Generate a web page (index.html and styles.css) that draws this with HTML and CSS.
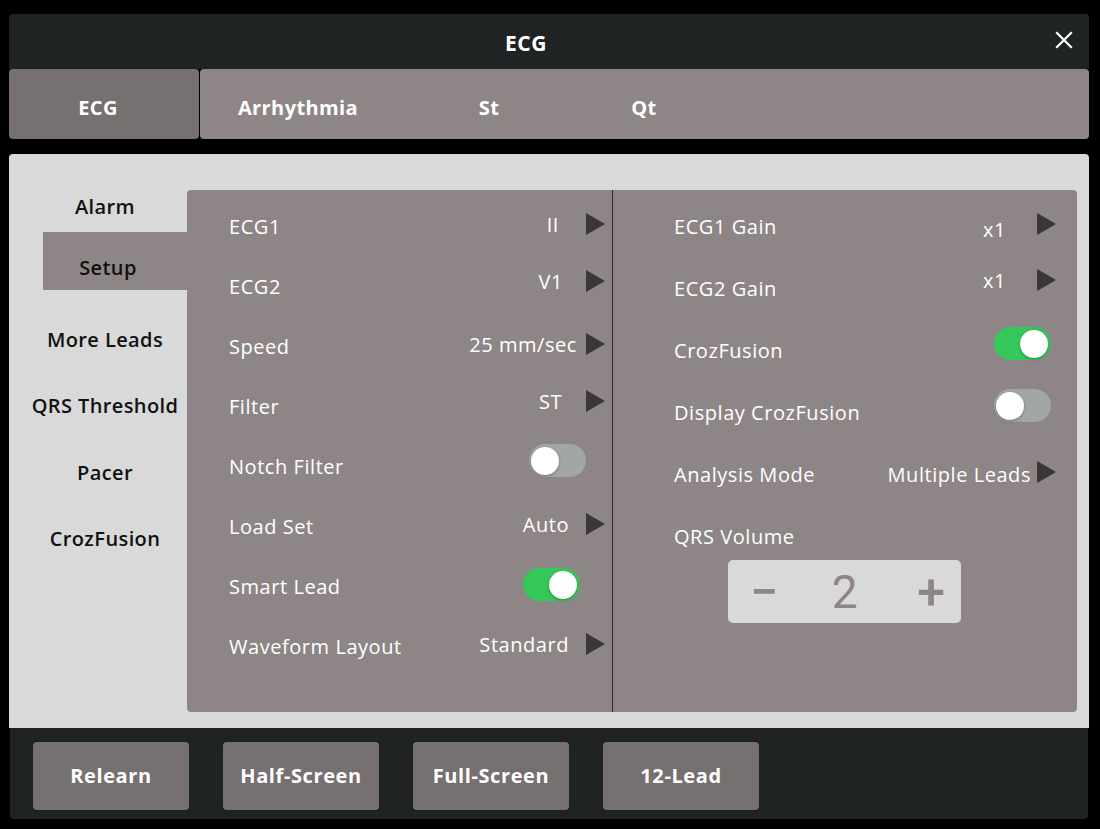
FILE: index.html
```html
<!DOCTYPE html>
<html>
<head>
<meta charset="utf-8">
<link rel="stylesheet" href="styles.css">
</head>
<body>
<div class="app">
  <header class="header">
    <span class="title">ECG</span>
    <svg class="close" width="18" height="18" viewBox="0 0 18 18"><path d="M2 2 L16 16 M16 2 L2 16" stroke="#fff" stroke-width="2.2" stroke-linecap="square"/></svg>
  </header>
  <nav class="tabs">
    <div class="tab active">ECG</div>
    <div class="tabgroup">
      <div class="tab t-arr">Arrhythmia</div>
      <div class="tab t-st">St</div>
      <div class="tab t-qt">Qt</div>
    </div>
  </nav>
  <section class="content">
    <aside class="sidebar">
      <div class="side-item alarm">Alarm</div>
      <div class="side-item setup">Setup</div>
      <div class="side-item more">More Leads</div>
      <div class="side-item">QRS Threshold</div>
      <div class="side-item">Pacer</div>
      <div class="side-item">CrozFusion</div>
    </aside>
    <main class="panel">
      <div class="col left">
        <div class="row"><span class="label">ECG1</span><span class="value v-ii">II</span><span class="arrow"></span></div>
        <div class="row"><span class="label">ECG2</span><span class="value up2 v-v1">V1</span><span class="arrow up2"></span></div>
        <div class="row"><span class="label">Speed</span><span class="value v-speed">25 mm/sec</span><span class="arrow"></span></div>
        <div class="row"><span class="label">Filter</span><span class="value up2 v-st">ST</span><span class="arrow up2"></span></div>
        <div class="row"><span class="label">Notch Filter</span><span class="toggle off notch"><span class="knob"></span></span></div>
        <div class="row"><span class="label">Load Set</span><span class="value">Auto</span><span class="arrow"></span></div>
        <div class="row"><span class="label">Smart Lead</span><span class="toggle on smart"><span class="knob"></span></span></div>
        <div class="row"><span class="label">Waveform Layout</span><span class="value">Standard</span><span class="arrow"></span></div>
      </div>
      <div class="col right">
        <div class="row"><span class="label">ECG1 Gain</span><span class="value x1 down">x1</span><span class="arrow"></span></div>
        <div class="row"><span class="label">ECG2 Gain</span><span class="value x1 up3">x1</span><span class="arrow up3"></span></div>
        <div class="row"><span class="label">CrozFusion</span><span class="toggle on rt"><span class="knob"></span></span></div>
        <div class="row"><span class="label">Display CrozFusion</span><span class="toggle off rt"><span class="knob"></span></span></div>
        <div class="row"><span class="label">Analysis Mode</span><span class="value tight">Multiple Leads</span><span class="arrow"></span></div>
        <div class="row"><span class="label">QRS Volume</span></div>
        <div class="stepper">
          <span class="step-btn">&#8722;</span>
          <span class="step-val">2</span>
          <span class="step-btn">+</span>
        </div>
      </div>
    </main>
  </section>
  <footer class="footer">
    <button class="btn">Relearn</button>
    <button class="btn">Half-Screen</button>
    <button class="btn">Full-Screen</button>
    <button class="btn">12-Lead</button>
  </footer>
</div>
</body>
</html>
```

FILE: styles.css
```css
* { box-sizing: border-box; }
html, body { margin: 0; padding: 0; background: #000; }
body {
  font-family: "Open Sans", "Liberation Sans", sans-serif;
  width: 1100px;
  height: 829px;
  overflow: hidden;
}
.app {
  width: 1080px;
  margin: 14px 0 0 9px;
}
.header {
  position: relative;
  height: 55px;
  background: #202324;
  border-radius: 4px 4px 0 0;
  display: flex;
  align-items: center;
  justify-content: center;
}
.title {
  color: #fff;
  font-weight: 700;
  font-size: 21px;
  letter-spacing: 0.5px;
  margin-right: 46px;
  margin-top: 2px;
}
.close {
  position: absolute;
  right: 16px;
  top: 17px;
}
.tabs {
  height: 70px;
  display: flex;
  gap: 1px;
}
.tab {
  color: #fff;
  font-weight: 700;
  font-size: 20px;
  letter-spacing: 0.4px;
  display: flex;
  align-items: center;
  justify-content: center;
  padding-top: 6px;
}
.tab.active {
  width: 190px;
  background: #767070;
  border-radius: 4px;
  padding-right: 12px;
}
.tabgroup {
  flex: 1;
  display: flex;
  background: #8e8686;
  border-radius: 4px;
}
.t-arr { width: 196px; }
.t-st { width: 186px; }
.t-qt { width: 124px; }
.content {
  margin-top: 15px;
  height: 574px;
  background: #d9d9d9;
  border-radius: 4px 4px 0 0;
  display: flex;
  padding: 36px 12px 16px 0;
}
.sidebar {
  width: 178px;
  margin-top: -10px;
}
.side-item {
  height: 66.5px;
  padding-left: 14px;
  display: flex;
  align-items: center;
  justify-content: center;
  font-weight: 600;
  font-size: 20px;
  letter-spacing: 0.4px;
  color: #111;
}
.side-item.alarm { height: 52px; }
.side-item.setup {
  height: 58px;
  margin-left: 34px;
  padding: 12px 14px 0 0;
  background: #8e8686;
}
.side-item.more { margin-top: 16px; }
.panel {
  flex: 1;
  background: #8e8686;
  border-radius: 4px;
  display: flex;
}
.col { display: flex; flex-direction: column; }
.col.left {
  width: 426px;
  border-right: 1px solid #2e2b2b;
  padding: 6px 7px 0 42px;
}
.col.right {
  flex: 1;
  padding: 5px 21px 0 61px;
}
.row {
  height: 60px;
  display: flex;
  align-items: center;
  color: #fff;
  font-size: 20px;
  letter-spacing: 0.55px;
}
.col.right .row { height: 62px; }
.label { flex: 1; }
.value { margin-right: 17px; margin-top: -4px; }
.v-ii { margin-right: 27px; }
.v-v1 { margin-right: 23px; }
.v-st { margin-right: 24px; }
.v-speed { margin-right: 9px; }
.value.tight { margin-right: 6px; margin-top: 0; }
.value.x1 { margin-right: 31px; }
.down { position: relative; top: 5px; }
.up2 { position: relative; top: -3px; }
.up3 { position: relative; top: -6px; }
.arrow {
  width: 0;
  height: 0;
  border-top: 11px solid transparent;
  border-bottom: 11px solid transparent;
  border-left: 19px solid #3b3737;
  margin-top: -4px;
}
.toggle {
  position: relative;
  width: 57px;
  height: 33px;
  border-radius: 17px;
  margin-right: 19px;
}
.toggle.rt { margin-right: 5px; margin-top: -14px; }
.toggle.smart { margin-right: 25px; margin-top: -4px; }
.toggle.notch { margin-top: -12px; }
.toggle.on { background: #34c759; }
.toggle.off { background: #a2a7a3; }
.knob {
  position: absolute;
  top: 3px;
  width: 28px;
  height: 28px;
  border-radius: 50%;
  background: #fff;
  box-shadow: 0 1px 3px rgba(0,0,0,0.3);
}
.toggle.on .knob { right: 3px; }
.toggle.off .knob { left: 2px; }
.stepper {
  margin: -7px 0 0 54px;
  width: 233px;
  height: 63px;
  background: #d9d9d9;
  border-radius: 5px;
  display: flex;
  align-items: center;
  justify-content: space-between;
  padding: 0 16px 0 22px;
  color: #8e8686;
  font-family: "Roboto", "Liberation Sans", sans-serif;
  font-size: 46px;
  line-height: 1;
}
.step-btn { font-size: 50px; font-weight: 500; }
.step-val { font-size: 46px; margin-right: 6px; }
.footer {
  height: 91px;
  background: #202324;
  border-radius: 0 0 4px 4px;
  display: flex;
  align-items: center;
  gap: 34px;
  padding: 0 0 0 23px;
  margin-left: 1px;
  margin-right: 1px;
}
.btn {
  width: 156px;
  height: 68px;
  background: #767070;
  border: none;
  border-radius: 4px;
  color: #fff;
  font-family: "Open Sans", "Liberation Sans", sans-serif;
  font-weight: 700;
  font-size: 20px;
  letter-spacing: 0.6px;
  padding: 0;
  margin-top: 4px;
}
```
